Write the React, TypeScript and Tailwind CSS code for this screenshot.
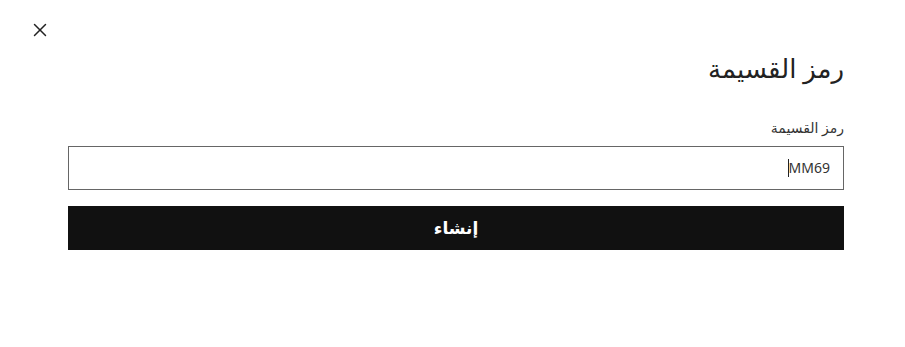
import { X } from 'lucide-react';

export default function App() {
  return (
    <div
      className="w-[905px] h-[347px] bg-white relative"
      style={{ fontFamily: '"Noto Sans", "DejaVu Sans", sans-serif' }}
    >
      <button className="absolute left-[29px] top-[19px] text-[#222]" aria-label="close">
        <X size={22} strokeWidth={1.6} />
      </button>

      <div dir="rtl" className="pr-[61px] pl-[68px] pt-[50px]">
        <h2 className="text-[26px] leading-[36px] text-[#222]">رمز القسيمة</h2>

        <label className="block mt-[32px] text-[14px] leading-[20px] text-[#333]">رمز القسيمة</label>
        <div className="mt-[8px] h-[44px] border border-[#666] flex items-center pr-[13px]">
          <span dir="ltr" className="text-[14px] text-[#333] border-l border-[#222] leading-[18px]">
            MM69
          </span>
        </div>

        <button className="mt-[16px] w-full h-[44px] bg-[#111] text-white font-bold text-[17px]">
          إنشاء
        </button>
      </div>
    </div>
  );
}
